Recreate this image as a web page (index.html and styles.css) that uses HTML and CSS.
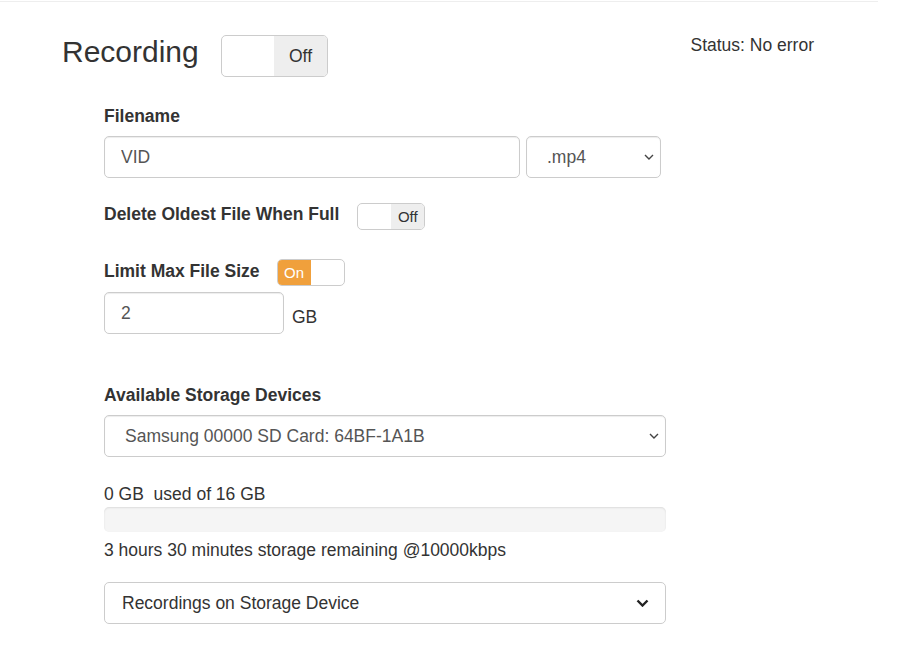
FILE: index.html
```html
<!DOCTYPE html>
<html lang="en">
<head>
    <meta charset="UTF-8">
    <meta name="viewport" content="width=device-width, initial-scale=1.0">
    <title>Recording</title>
    <link rel="stylesheet" href="styles.css">
</head>
<body>
    <div class="page">
        <div class="header">
            <h3 class="title">Recording</h3>
            <div class="toggle toggle-lg">
                <span class="half"></span>
                <span class="half half-off">Off</span>
            </div>
            <div class="status">Status: No error</div>
        </div>

        <div class="settings">
            <label class="label" for="filename">Filename</label>
            <div class="row">
                <input type="text" id="filename" class="control name-input" value="VID">
                <div class="select-wrap ext-select">
                    <select class="control">
                        <option>.mp4</option>
                        <option>.mkv</option>
                        <option>.ts</option>
                    </select>
                    <svg class="caret" width="10" height="6" viewBox="0 0 10 6"><path d="M1 1l4 4 4-4" fill="none" stroke="#444" stroke-width="1.4"/></svg>
                </div>
            </div>

            <div class="switch-row delete-row">
                <span class="label">Delete Oldest File When Full</span>
                <div class="toggle toggle-sm toggle-offset">
                    <span class="half"></span>
                    <span class="half half-off">Off</span>
                </div>
            </div>

            <div class="switch-row limit-row">
                <span class="label">Limit Max File Size</span>
                <div class="toggle toggle-sm">
                    <span class="half half-on">On</span>
                    <span class="half"></span>
                </div>
            </div>
            <div class="row size-row">
                <input type="text" class="control size-input" value="2">
                <span class="unit">GB</span>
            </div>

            <label class="label storage-label">Available Storage Devices</label>
            <div class="select-wrap wide">
                <select class="control">
                    <option>Samsung 00000 SD Card: 64BF-1A1B</option>
                </select>
                <svg class="caret" width="10" height="6" viewBox="0 0 10 6"><path d="M1 1l4 4 4-4" fill="none" stroke="#444" stroke-width="1.4"/></svg>
            </div>

            <div class="usage">0 GB &nbsp;used of 16 GB</div>
            <div class="progress"><div class="progress-bar" style="width: 0%"></div></div>
            <div class="remaining">3 hours 30 minutes storage remaining @10000kbps</div>

            <div class="dropdown">
                <span>Recordings on Storage Device</span>
                <svg width="13" height="8" viewBox="0 0 13 8"><path d="M1.5 1.5l5 5 5-5" fill="none" stroke="#222" stroke-width="2.4"/></svg>
            </div>
        </div>
    </div>
</body>
</html>
```

FILE: styles.css
```css
body {
    margin: 0;
    font-family: "Liberation Sans", Arial, sans-serif;
    font-size: 17.5px;
    line-height: 25px;
    color: #333;
    background-color: #fff;
}

.page {
    width: 878px;
    margin-top: 1px;
    border-top: 1px solid #eee;
}

.header {
    display: flex;
    align-items: flex-start;
    padding: 33px 64px 0 62px;
}

.title {
    margin: 0;
    font-size: 30px;
    font-weight: normal;
    line-height: 33px;
}

.status {
    margin-left: auto;
    margin-top: -2px;
}

/* toggles */
.toggle {
    display: flex;
    box-sizing: border-box;
    border: 1px solid #ccc;
    border-radius: 5px;
    overflow: hidden;
    background-color: #fff;
}

.toggle .half {
    flex: 1;
    display: flex;
    align-items: center;
    justify-content: center;
}

.toggle .half-off {
    background-color: #eee;
    color: #333;
}

.toggle .half-on {
    background-color: #f0a03c;
    color: #fff;
}

.toggle-lg {
    width: 107px;
    height: 42px;
    margin-left: 22px;
}

.toggle-sm {
    width: 68px;
    height: 27px;
    margin-left: 17px;
    font-size: 15px;
}

.toggle-offset {
    margin-top: 1px;
    margin-left: 18px;
}

/* form */
.settings {
    padding-left: 104px;
    padding-top: 27px;
}

.label {
    display: block;
    font-weight: bold;
    margin-bottom: 7px;
}

.row {
    display: flex;
}

.control {
    box-sizing: border-box;
    height: 42px;
    margin: 0;
    padding: 0 16px;
    border: 1px solid #ccc;
    border-radius: 5px;
    font-family: inherit;
    font-size: 17.5px;
    color: #555;
    background-color: #fff;
    box-shadow: inset 0 1px 1px rgba(0, 0, 0, 0.075);
    outline: none;
}

.name-input {
    width: 416px;
}

.select-wrap {
    position: relative;
}

.select-wrap select {
    width: 100%;
    padding-left: 20px;
    -webkit-appearance: none;
    appearance: none;
}

.select-wrap .caret {
    position: absolute;
    right: 7px;
    top: 18px;
    pointer-events: none;
}

.ext-select {
    width: 135px;
    margin-left: 6px;
}

.wide {
    width: 562px;
}

.switch-row {
    display: flex;
    align-items: flex-start;
}

.switch-row .label {
    margin-bottom: 0;
}

.delete-row {
    margin-top: 24px;
}

.limit-row {
    margin-top: 29px;
}

.size-row {
    margin-top: 6px;
}

.size-input {
    width: 180px;
}

.unit {
    align-self: flex-end;
    margin: 0 0 4px 8px;
}

.storage-label {
    margin-top: 49px;
}

.usage {
    margin-top: 25px;
}

.progress {
    width: 562px;
    height: 25px;
    border-radius: 5px;
    background-color: #f5f5f5;
    box-shadow: inset 0 1px 2px rgba(0, 0, 0, 0.1);
    overflow: hidden;
}

.progress-bar {
    height: 100%;
    background-color: #337ab7;
}

.remaining {
    margin-top: 6px;
}

.dropdown {
    box-sizing: border-box;
    width: 562px;
    height: 42px;
    margin-top: 19px;
    padding: 0 16px 0 17px;
    display: flex;
    align-items: center;
    justify-content: space-between;
    border: 1px solid #ccc;
    border-radius: 5px;
    color: #333;
}
```
